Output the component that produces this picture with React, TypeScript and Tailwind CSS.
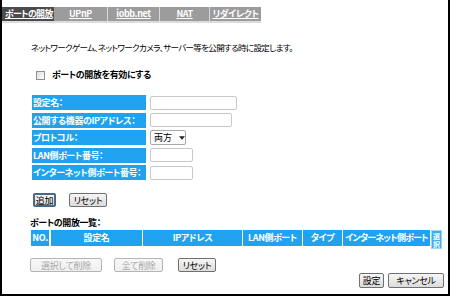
import React from "react";

const F = "[font-family:'Noto_Sans_CJK_JP','Noto_Sans',sans-serif] [font-feature-settings:'palt'] whitespace-nowrap";

function Btn({ children, w, h = "h-[14px]", disabled, focus }: { children: React.ReactNode; w: string; h?: string; disabled?: boolean; focus?: boolean }) {
  return (
    <div
      className={
        "flex items-center justify-center rounded-[2px] text-[9px] leading-none bg-gradient-to-b tracking-[-0.3px] " +
        w +
        " " +
        h +
        (disabled
          ? " border border-[#b5b5b5] text-[#a8a8a8] from-[#f8f8f8] to-[#efefef]"
          : focus
          ? " border-2 border-[#4a6786] text-black from-[#f6f6f6] to-[#dcdcdc]"
          : " border border-[#6f6f6f] text-black from-[#f6f6f6] to-[#dcdcdc]")
      }
    >
      {children}
    </div>
  );
}

function Row({ label, children }: { label: string; children: React.ReactNode }) {
  return (
    <div className="flex h-[15px] items-stretch">
      <div className="w-[114px] bg-[#1fa3f0] text-white font-bold text-[9px] leading-[15px] pl-[1px] tracking-[-0.4px] overflow-hidden">{label}</div>
      <div className="ml-[4px] flex items-center">{children}</div>
    </div>
  );
}

export default function App() {
  const tabs = ["UPnP", "iobb.net", "NAT", "リダイレクト"];
  const tabW = ["w-[53px]", "w-[52px]", "w-[50px]", "w-[52px]"];
  return (
    <div className={"w-[450px] h-[296px] bg-white border-l-2 border-r-2 border-b-2 border-black flex flex-col " + F}>
      {/* tabs */}
      <div className="mt-[7px] flex flex-col">
        <div className="flex h-[14px]">
          <div className="w-[52px] bg-[#4b4b4b] text-white font-bold text-[9px] leading-[14px] underline pl-[3px] tracking-[-0.7px]">ポートの開放</div>
          {tabs.map((t, i) => (
            <div
              key={t}
              className={
                "bg-[#9c9c9c] text-white font-bold text-[9px] leading-[14px] text-center underline tracking-[-0.4px] " +
                tabW[i] +
                (i > 0 ? " border-l border-[#d8d8d8]" : "")
              }
            >
              {t}
            </div>
          ))}
        </div>
        <div className="w-[259px] h-[2px] bg-[#dcdcdc]" />
      </div>

      <div className="mt-[18px] ml-[29px] text-[8.5px] leading-[12px] text-black tracking-[-0.65px]">
        ネットワークゲーム、ネットワークカメラ、サーバー等を公開する時に設定します。
      </div>

      <div className="mt-[16px] ml-[34px] flex items-center h-[12px]">
        <div className="w-[9px] h-[9px] border border-[#8e8f8f] bg-gradient-to-br from-[#dcdcdc] to-[#ffffff]" />
        <div className="ml-[7px] text-[9px] font-bold leading-[12px] text-black tracking-[-0.4px]">ポートの開放を有効にする</div>
      </div>

      {/* form */}
      <div className="mt-[14px] ml-[30px] flex flex-col gap-[2.5px]">
        <Row label="設定名：">
          <div className="w-[87px] h-[14px] border border-[#c8c8c8] rounded-[2px] bg-white" />
        </Row>
        <Row label="公開する機器のIPアドレス：">
          <div className="w-[82px] h-[14px] border border-[#c8c8c8] rounded-[2px] bg-white" />
        </Row>
        <Row label="プロトコル：">
          <div className="w-[36px] h-[15px] border border-[#a9a9a9] rounded-[2px] bg-white flex items-center text-[9px] text-black pl-[3px] leading-none">
            <span>両方</span>
            <svg width="7" height="4" viewBox="0 0 7 4" className="ml-[7px]">
              <path d="M0 0H7L3.5 4Z" fill="#222" />
            </svg>
          </div>
        </Row>
        <Row label="LAN側ポート番号：">
          <div className="w-[43px] h-[14px] border border-[#c8c8c8] rounded-[2px] bg-white" />
        </Row>
        <Row label="インターネット側ポート番号：">
          <div className="w-[43px] h-[14px] border border-[#c8c8c8] rounded-[2px] bg-white" />
        </Row>
      </div>

      <div className="mt-[13px] ml-[31px] flex gap-[13px]">
        <Btn w="w-[23px]" focus>追加</Btn>
        <Btn w="w-[38px]">リセット</Btn>
      </div>

      <div className="mt-[10px] ml-[28px] text-[9px] font-bold leading-[12px] text-black tracking-[-0.4px]">ポートの開放一覧：</div>

      <div className="mt-[1px] ml-[29px] flex items-start text-white font-bold text-[9px] tracking-[-0.4px]">
        <div className="w-[18px] h-[16px] bg-[#1fa3f0] leading-[16px] text-center mr-[2px]">NO.</div>
        <div className="w-[91px] h-[16px] bg-[#1fa3f0] leading-[16px] text-center mr-[1px]">設定名</div>
        <div className="w-[99px] h-[16px] bg-[#1fa3f0] leading-[16px] text-center mr-[1px]">IPアドレス</div>
        <div className="w-[59px] h-[16px] bg-[#1fa3f0] leading-[16px] text-center mr-[1px]">LAN側ポート</div>
        <div className="w-[39px] h-[16px] bg-[#1fa3f0] leading-[16px] text-center mr-[1px]">タイプ</div>
        <div className="w-[87px] h-[16px] bg-[#1fa3f0] leading-[16px] text-center mr-[1px] overflow-hidden tracking-[-0.8px]">インターネット側ポート</div>
        <div className="w-[11px] h-[19px] bg-[#3aaff2] border border-[#9fd6f8] text-[7px] leading-[8.5px] text-center tracking-normal overflow-hidden whitespace-normal pt-[0.5px]">
          選<br />択
        </div>
      </div>

      <div className="mt-[9px] ml-[28px] flex">
        <Btn w="w-[72px]" disabled>選択して削除</Btn>
        <div className="ml-[12px]">
          <Btn w="w-[49px]" disabled>全て削除</Btn>
        </div>
        <div className="ml-[15px]">
          <Btn w="w-[38px]">リセット</Btn>
        </div>
      </div>

      <div className="mt-[1px] mr-[4px] flex justify-end gap-[4px]">
        <Btn w="w-[25px]" h="h-[15px]">設定</Btn>
        <Btn w="w-[56px]" h="h-[15px]">キャンセル</Btn>
      </div>
    </div>
  );
}
